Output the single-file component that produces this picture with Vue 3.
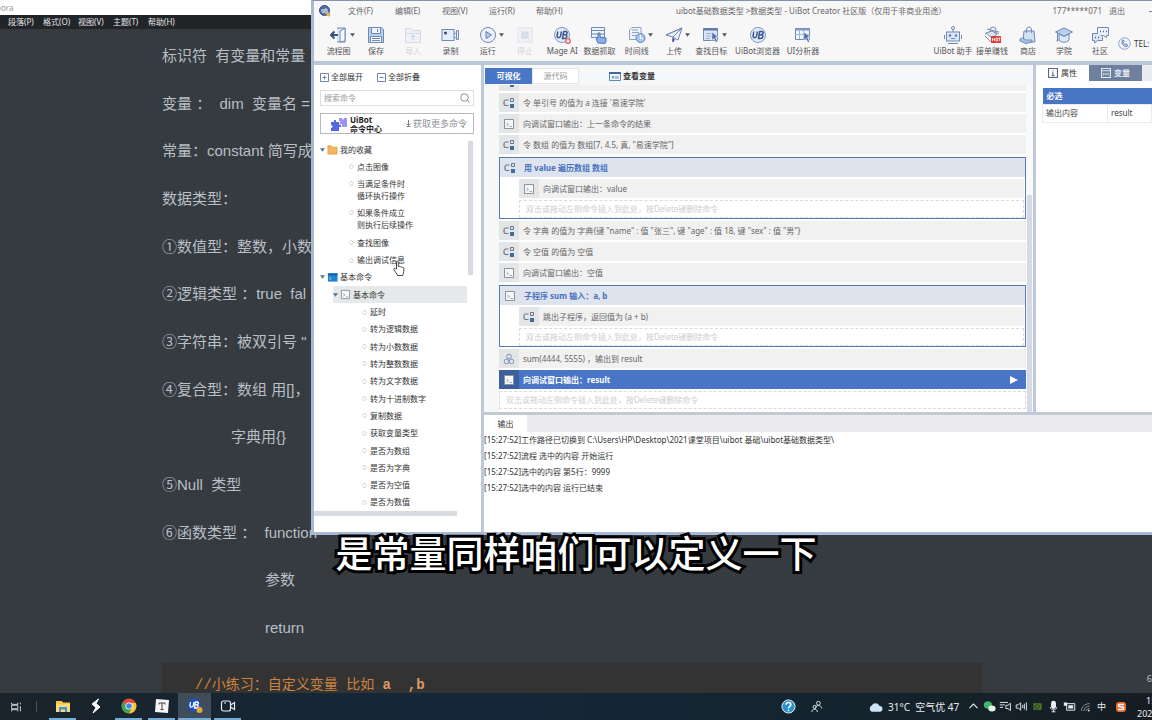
<script setup>
const docMenus = ['段落(P)', '格式(O)', '视图(V)', '主题(T)', '帮助(H)']
const docLines = [
  { text: '标识符  有变量和常量' },
  { text: '变量 ：  dim  变量名 =' },
  { text: '常量：constant 简写成' },
  { text: '数据类型：' },
  { text: '①数值型：整数，小数' },
  { text: '②逻辑类型 ：true  fal' },
  { text: '③字符串：被双引号 "' },
  { text: '④复合型：数组 用[]，' },
  { text: '字典用{}', level: 'in1' },
  { text: '⑤Null  类型' },
  { text: '⑥函数类型 ：  function' },
  { text: '参数', level: 'in2' },
  { text: 'return', level: 'in2' }
]

const winMenus = ['文件(F)', '编辑(E)', '视图(V)', '运行(R)', '帮助(H)']

const L = 'fill="none" stroke="#6f88b4" stroke-width="1"'
const icons = {
  flow: `<path d="M7 2h8v14H7" fill="#dbe6f5" stroke="#6f88b4"/><path d="M15 2l-5 3v11l5-1z" fill="#f4f8fd" stroke="#6f88b4"/><path d="M1 9h7M4.500 5.500L1 9l3.500 3.500" fill="none" stroke="#3a4f7c" stroke-width="2"/>`,
  save: `<path d="M1.500 1.500h13l2 2v13h-15z" fill="#b9cdea" stroke="#6f88b4"/><path d="M4.500 1.500h9v6h-9z" fill="#edf3fb" stroke="#6f88b4"/><path d="M3.500 10.500h11v6h-11z" fill="#f7fafd" stroke="#6f88b4"/><path d="M10.500 3v3M5 12.500h8M5 14.500h8" ${L}/>`,
  import: `<path d="M1.500 16.500v-14h5l2 2h8v12z" fill="#eef1f6" stroke="#d4dae4"/><path d="M1.500 7.500h15" stroke="#d4dae4"/><path d="M9 14V9M7 11l2-2 2 2" fill="none" stroke="#c2cad8"/>`,
  record: `<rect x="1" y="3.500" width="12" height="11" fill="#e6eef9" stroke="#6f88b4"/><circle cx="4.500" cy="7" r="1.500" fill="#32477a"/><path d="M13 8l2-1M13 11l2 1M15.500 4.500h2v9h-2z" fill="#e6eef9" stroke="#6f88b4"/>`,
  run: `<circle cx="9" cy="9" r="7.500" fill="#eef3fb" stroke="#6f88b4"/><path d="M7 5.500v7l5.500-3.500z" fill="#b9cdea" stroke="#5f7eb6"/>`,
  stop: `<rect x="2" y="2" width="14" height="14" fill="#f0f2f6" stroke="#dde2ea"/><rect x="6" y="6" width="6" height="6" fill="#dbe1ea" stroke="#d0d7e2"/>`,
  ub: `<circle cx="9" cy="9" r="7.500" fill="#e3edf9" stroke="#7d97c6"/><path d="M4.800 5.500l-.7 4.200c-.3 2.600 3 2.600 3.500.2l.8-4.400M9.500 12.500l1.200-7h2c2.200.2 1.700 3-.3 3.300h-1.900 1.900c2.400.2 1.500 3.700-.9 3.700z" fill="none" stroke="#3a548c" stroke-width="1.500"/>`,
  grab: `<path d="M1.500 1.500h13v10h-13z" fill="#edf3fb" stroke="#6f88b4"/><path d="M1.500 4.500h13M1.500 8h13" stroke="#6f88b4"/><path d="M8 17l-2-4 2-1V7h2v4l6 1v4l-1 1.500z" fill="#8bb0e8" stroke="#4c74ba"/>`,
  time: `<path d="M4 1.500h9v12H1.500V4z" fill="#edf3fb" stroke="#8ea2c6"/><path d="M4 6.500h7M4 9.500h5M4 4h6" stroke="#8ea2c6"/><circle cx="12.500" cy="12" r="4.500" fill="#a9c6f0" stroke="#5f84c2"/><path d="M12.500 9v3.500h2.500" fill="none" stroke="#fff"/>`,
  send: `<path d="M1 9L17 2l-4 12-5-3z" fill="#eef4fc" stroke="#6f88b4"/><path d="M17 2L8 11v5l2.500-3.500M17 2L1 9" fill="none" stroke="#6f88b4"/><path d="M7.500 11.500v5l2-3z" fill="#32477a"/>`,
  target: `<path d="M1.500 2.500h14v12h-14z" fill="#dbe6f5" stroke="#6f88b4"/><path d="M1.500 3.500h14" stroke="#5d78ac" stroke-width="2"/><path d="M4 7.500h6M4 10h6M4 12.500h4" stroke="#9fb3d6"/><path d="M10 6l6 5-2.500.5 2 4-1.500 1-2-4-2 2z" fill="#4e6ca6" stroke="#fff" stroke-width=".5"/>`,
  analyze: `<path d="M1.500 2.500h14v11h-14z" fill="#f2f6fc" stroke="#6f88b4"/><path d="M1.500 3.500h14" stroke="#7f99cc" stroke-width="2"/><path d="M5.500 4v9M9.500 4v9M1.500 8.500h14" stroke="#9fb3d6"/><path d="M10 6l6 5-2.500.5 2 4-1.500 1-2-4-2 2z" fill="#4e6ca6" stroke="#fff" stroke-width=".5"/>`,
  robot: `<circle cx="9" cy="2" r="1.500" ${L}/><path d="M9 3.500V6" ${L}/><rect x="2.500" y="6" width="13" height="9" fill="#dbe7f7" stroke="#6f88b4"/><circle cx="6" cy="9.500" r="1.200" fill="#5476b4"/><circle cx="12" cy="9.500" r="1.200" fill="#5476b4"/><path d="M7 12.500h4M.5 9v4M17.500 9v4M4 17.500h10" ${L}/>`,
  hot: `<circle cx="10" cy="4" r="3" fill="#eef3fa" stroke="#7a8fb6"/><path d="M4 3l12 3M2 8c4-3 10-3 14 0M2 10l6 6" fill="none" stroke="#7a8fb6"/><path d="M3 7l6-2 5 3-5 4z" fill="#dbe4f2" stroke="#7a8fb6"/><rect x="8" y="10" width="10" height="7" fill="#d9403c"/><path d="M9.500 12v3M11.500 12v3M9.500 13.500h2M13 12h1.500v3H13zM15.500 12h2M16.500 12v3" fill="none" stroke="#fff" stroke-width=".7"/>`,
  shop: `<path d="M5 5h10l1 11H4z" fill="#d3e1f5" stroke="#6f88b4"/><path d="M7.500 7V4c0-4 5-4 5 0v3" ${L}/><path d="M1 13c2-2 4 0 6 1h6v2l-6 1.500L1 15z" fill="#a9c2e8" stroke="#6f88b4"/>`,
  school: `<path d="M9 2l8.500 4L9 10 .5 6z" fill="#b9d2f2" stroke="#6f88b4"/><path d="M4 8v6c2 3 8 3 10 0V8l-5 2.500z" fill="#dce8f8" stroke="#6f88b4"/><path d="M2.500 7v7" stroke="#6f88b4"/><circle cx="2.500" cy="14.500" r="1" fill="#6f88b4"/>`,
  chat: `<path d="M6.500 1.500h11v8h-2v2l-3-2h-6z" fill="#eef3fb" stroke="#6f88b4"/><path d="M6.500 7.500h-5v7h2v2.500l3-2.500h5v-4" fill="#dbe6f5" stroke="#6f88b4"/><path d="M9 5.500h1M12 5.500h1M15 5.500h1M4 11.500h1M7 11.500h1" stroke="#4c6496" stroke-width="1.500"/>`,
  phone: `<circle cx="9" cy="9" r="8" fill="#f2f6fc" stroke="#6080b8"/><path d="M6 4.500c-2 4 1 9 6 9l1.500-2.500-2.500-1.500-1.500 1C8 9.500 7.500 8.500 7.500 7.500L8.500 6.500 7.500 4z" fill="#b9cdea" stroke="#46659f"/>`
}
const tools = [
  { n: '流程图', i: 'flow', c: true }, { n: '保存', i: 'save' }, { n: '导入', i: 'import', off: true },
  { n: '录制', i: 'record' }, { n: '运行', i: 'run', c: true }, { n: '停止', i: 'stop', off: true },
  { n: 'Mage AI', i: 'ub', b: true }, { n: '数据抓取', i: 'grab' }, { n: '时间线', i: 'time', c: true },
  { n: '上传', i: 'send', c: true }, { n: '查找目标', i: 'target', c: true }
]
const links = [
  { n: '接单赚钱', i: 'hot' }, { n: '商店', i: 'shop' }, { n: '学院', i: 'school' }, { n: '社区', i: 'chat' }
]

const tree = [
  { t: ['我的收藏'], k: 'root', i: 'folder' },
  { t: ['点击图像'], k: 'fav' },
  { t: ['当满足条件时', '循环执行操作'], k: 'fav' },
  { t: ['如果条件成立', '则执行后续操作'], k: 'fav' },
  { t: ['查找图像'], k: 'fav' },
  { t: ['输出调试信息'], k: 'fav' },
  { t: ['基本命令'], k: 'root', i: 'cmd' },
  { t: ['基本命令'], k: 'sub', i: 'term' },
  ...['延时', '转为逻辑数据', '转为小数数据', '转为整数数据', '转为文字数据', '转为十进制数字', '复制数据',
    '获取变量类型', '是否为数组', '是否为字典', '是否为空值', '是否为数值'].map(t => ({ t: [t], k: 'leaf' }))
]

const small = {
  set: `<path d="M5.500 3H2.500C1.500 3 1 3.700 1 5v1.500C1 8 1.500 8.500 2.500 8.500h3" fill="none" stroke="#66788f" stroke-width="1.200"/><path d="M7.500 1.500h3v3h-3z" fill="none" stroke="#66788f"/><path d="M7 7h4v4H7z" fill="#3c6f9c"/>`,
  term: `<path d="M1.500 1.500h9v9h-9z" fill="#f6f7f8" stroke="#8a929c"/><path d="M3.500 5l2 1.500-2 1.500M6.500 8.500h2.500" fill="none" stroke="#8a929c" stroke-width=".8"/>`,
  cubes: `<circle cx="6" cy="3.500" r="2.300" fill="none" stroke="#7d94b8"/><circle cx="3.500" cy="8.500" r="2.300" fill="none" stroke="#7d94b8"/><circle cx="8.500" cy="8.500" r="2.300" fill="none" stroke="#7d94b8"/>`,
  folder: `<path d="M1 2h4l1 1.500h5V11H1z" fill="#f3b562" stroke="#e09a3c" stroke-width=".8"/>`,
  cmd: `<path d="M1 1.500h10.500v9H1z" fill="#1d83d6"/><path d="M1 1.500h10.500v2H1z" fill="#155fa5"/><path d="M2.500 5.500l2 1.500-2 1.500" fill="none" stroke="#cfe6fa" stroke-width=".8"/>`
}
const dropHint = '双击或拖动左侧命令插入到此处，按Delete键删除命令'
const rows = [
  { i: 'set', t: '' },
  { i: 'set', t: "令 单引号 的值为 a 连接 '易速学院'" },
  { i: 'term', t: '向调试窗口输出：上一条命令的结果' },
  { i: 'set', t: '令 数组 的值为 数组[7, 4.5, 真, "易速学院"]' },
  { i: 'set', t: '用 value 遍历数组 数组', child: { i: 'term', t: '向调试窗口输出：value' } },
  { i: 'set', t: '令 字典 的值为 字典{键 "name" : 值 "张三", 键 "age" : 值 18, 键 "sex" : 值 "男"}' },
  { i: 'set', t: '令 空值 的值为 空值' },
  { i: 'term', t: '向调试窗口输出：空值' },
  { i: 'term', t: '子程序 sum 输入：a, b', child: { i: 'set', t: '跳出子程序，返回值为 (a + b)' } },
  { i: 'cubes', t: 'sum(4444, 5555) ，输出到 result' },
  { i: 'term', t: '向调试窗口输出：result', on: true }
]
const logs = [
  '[15:27:52]工作路径已切换到 C:\\Users\\HP\\Desktop\\2021课堂项目\\uibot 基础\\uibot基础数据类型\\',
  '[15:27:52]流程 选中的内容 开始运行',
  '[15:27:52]选中的内容 第5行：9999',
  '[15:27:52]选中的内容 运行已结束'
]

const apps = [
  { n: '文件资源管理器', open: true, s: `<path d="M1 3h6l1 1.500h7V14H1z" fill="#f0c64c"/><path d="M1 6h14v8H1z" fill="#f9dc78"/><path d="M4 9h8v5h-2v-2.500H6V14H4z" fill="#4a94c8"/>` },
  { n: '笔记', s: `<path d="M10.500 1L4 6l4 3.500L5 15l7-6-4-3.500z" fill="#fff" stroke="#fff"/>` },
  { n: 'Chrome', open: true, s: `<circle cx="8" cy="8" r="7.500" fill="#e04a3a"/><path d="M1.500 4.300A7.500 7.500 0 0 0 8 15.500L11 9.500 8 8z" fill="#3da352"/><path d="M8 15.500A7.500 7.500 0 0 0 14.800 5H8l3 4.500z" fill="#f5c93a"/><circle cx="8" cy="8" r="3.600" fill="#fff"/><circle cx="8" cy="8" r="2.800" fill="#4486e8"/>` },
  { n: 'Typora', open: true, s: `<path d="M2 1l13 1-1 13-13-1z" fill="#f4f4f4"/><path d="M5 5h6M8 5v6.500M6.500 11.500h3M5 5v1.500M11 5v1.500" fill="none" stroke="#444"/>` },
  { n: 'UiBot', open: true, on: true, s: `<circle cx="7" cy="7" r="6.500" fill="#1b4fc4"/><path d="M3.500 4L3 7.500c0 2.500 3 2 3.300 0L7 4M7.500 10l1-6h1.700c2 .2 1.500 2.700-.5 2.800H8.500h1.400C12 7 11.200 10 9.500 10z" fill="none" stroke="#fff" stroke-width="1.300"/><circle cx="12.500" cy="12" r="3" fill="#e5a93a"/>` },
  { n: '录屏', open: true, s: `<rect x="1.500" y="3" width="9" height="10" rx="2" fill="none" stroke="#e8ecf0" stroke-width="1.200"/><path d="M10.500 7l4-2.500v7L10.500 9" fill="none" stroke="#e8ecf0" stroke-width="1.200"/><path d="M4 5h2" stroke="#e8ecf0"/>` }
]
const tray = [
  { n: '展开', s: `<path d="M3 10l5-5 5 5" fill="none" stroke="#e8ecf0" stroke-width="1.300"/>` },
  { n: '微信', s: `<ellipse cx="6" cy="6" rx="5" ry="4.500" fill="#43b56b"/><ellipse cx="11" cy="10.500" rx="4.500" ry="3.700" fill="#e6f5ea"/>` },
  { n: '媒体', s: `<path d="M1 3h10M1 6h6M1 9h4M14 4v9l-3-2.500H8.500v-4H11z" fill="none" stroke="#dfe4e8" stroke-width="1.200"/>` },
  { n: '音量', s: `<path d="M1.500 6h2.500L7 3.500v9L4 10H1.500zM9.500 6v4M11.500 4.500v7M14 3v10" fill="none" stroke="#dfe4e8" stroke-width="1.200"/>` },
  { n: '显卡', s: `<path d="M3 4h10v8H3z" fill="#4c7a24"/><ellipse cx="7.500" cy="8" rx="3" ry="2" fill="none" stroke="#1b2830"/>` },
  { n: '麦克风', s: `<rect x="5" y="1" width="6" height="10" rx="3" fill="#f2f4f6"/><path d="M4 8.500c0 5 8 5 8 0M8 12v3M5.500 14.500h5" fill="none" stroke="#f2f4f6"/>` },
  { n: '电源', s: `<path d="M4.500 4.500h10v8h-10z" fill="none" stroke="#e8ecf0" stroke-width="1.200"/><path d="M6.500 6.500h6v4h-6zM1 3h4v4H1z" fill="#e8ecf0"/>` },
  { n: '网络', s: `<path d="M3 13.500c0-5 4-9 10-9M6 13.500c0-3.500 3-6 7-6M9 13.500c0-2 1.500-3 4-3" fill="none" stroke="#8b9499" stroke-width="1.200"/><path d="M11 12h2v2h-2z" fill="#dfe4e8"/>` }
]
</script>

<template>
  <div class="desktop">
    <main class="editor">
      <div class="doc-title">pora</div>
      <nav class="doc-menu"><button v-for="m in docMenus" :key="m">{{ m }}</button></nav>
      <article class="doc">
        <p v-for="l in docLines" :key="l.text" :class="l.level">{{ l.text }}</p>
      </article>
      <pre class="code">//小练习：自定义变量 比如 <b>a  ,b</b></pre>
      <span class="count">6</span>
    </main>

    <section class="win">
      <header class="titlebar">
        <svg class="logo" viewBox="0 0 12 12"><circle cx="5.500" cy="5.500" r="5" fill="#4c6d9e" stroke="#2d4f86" /><path d="M3 4v2.500c0 1.500 2 1.500 2 0V4M6 8V4h1.500c1 .2 1 1.800 0 2 1.500 0 1.200 2 0 2z" fill="none" stroke="#e8f0fa" /><circle cx="9.500" cy="9.500" r="2" fill="#e5b05a" /></svg>
        <nav class="win-menu"><button v-for="m in winMenus" :key="m">{{ m }}</button></nav>
        <h1>uibot基础数据类型 &gt;数据类型 - UiBot Creator 社区版（仅用于非商业用途）</h1>
        <div class="account"><span>177*****071</span><a href="#">退出</a></div>
        <button class="min" aria-label="最小化"></button>
      </header>

      <div class="toolbar">
        <div class="tools">
          <button v-for="t in tools" :key="t.n" class="tool" :class="{ off: t.off }">
            <span class="pic">
              <svg viewBox="0 0 18 18" v-html="icons[t.i]"></svg>
              <svg v-if="t.c" class="caret" viewBox="0 0 6 4"><path d="M0 0h6L3 4z" fill="#555b66" /></svg>
              <svg v-if="t.b" class="plus" viewBox="0 0 6 6"><circle cx="3" cy="3" r="3" fill="#d96a6a" /><path d="M3 1v4M1 3h4" stroke="#fff" /></svg>
            </span>{{ t.n }}
          </button>
        </div>
        <button class="tool w-browser"><span class="pic"><svg viewBox="0 0 18 18" v-html="icons.ub"></svg></span>UiBot浏览器</button>
        <button class="tool w-link"><span class="pic"><svg viewBox="0 0 18 18" v-html="icons.analyze"></svg></span>UI分析器</button>
        <div class="links">
          <button class="tool w-helper"><span class="pic"><svg viewBox="0 0 18 18" v-html="icons.robot"></svg></span>UiBot 助手</button>
          <button v-for="t in links" :key="t.n" class="tool w-link"><span class="pic"><svg viewBox="0 0 18 18" v-html="icons[t.i]"></svg></span>{{ t.n }}</button>
          <div class="tel"><svg viewBox="0 0 18 18" v-html="icons.phone"></svg><span>TEL:</span></div>
        </div>
      </div>

      <div class="body">
        <aside class="side">
          <div class="expand">
            <button><svg viewBox="0 0 9 9"><path d="M.5.5h8v8h-8zM4.500 2.500v4M2.500 4.500h4" fill="none" stroke="#6f86a8" /></svg>全部展开</button>
            <button><svg viewBox="0 0 9 9"><path d="M.5.5h8v8h-8zM2.500 4.500h4" fill="none" stroke="#6f86a8" /></svg>全部折叠</button>
          </div>
          <label class="search">
            <input type="text" placeholder="搜索命令" aria-label="搜索命令">
            <svg viewBox="0 0 10 10"><circle cx="4.500" cy="4.500" r="3.800" fill="none" stroke="#8a8f98" /><path d="M7.300 7.300L9.700 9.700" stroke="#8a8f98" /></svg>
          </label>
          <button class="center">
            <svg viewBox="0 0 18 15"><path d="M1 6h3c-1-3 3-3 2 0h3v3c3-1 3 3 0 2v4H1v-3c2 0 2-3 0-3z" fill="#5468e6" /><path d="M9 2h3c0 2 2 2 2 0h3v9h-5V8c-3 1-3-3-1-3H9z" fill="#9a92f4" /></svg>
            <b>UiBot<br>命令中心</b>
            <span><svg viewBox="0 0 5 7"><path d="M2.500 0v5M.5 3.500l2 2 2-2M.5 6.500h4" fill="none" stroke="#7a7f88" /></svg>获取更多命令</span>
          </button>
          <div class="tree-wrap">
            <ul class="tree">
              <li v-for="(n, k) in tree" :key="k" :class="[n.k, { two: n.t.length > 1 }]">
                <svg v-if="n.i" class="arr" viewBox="0 0 6 4"><path d="M0 0h6L3 4z" fill="#4f7396" /></svg>
                <svg v-if="n.i" class="ic" viewBox="0 0 12 12" v-html="small[n.i]"></svg>
                <svg v-else class="dot" viewBox="0 0 5 7"><path d="M2.500 1L4.500 3.500 2.500 6 .5 3.500z" fill="none" stroke="#c3c6ca" stroke-width=".8" /></svg>
                <span><template v-for="(s, j) in n.t" :key="s"><br v-if="j">{{ s }}</template></span>
              </li>
            </ul>
            <div class="vbar"></div>
          </div>
          <div class="hbar"></div>
        </aside>

        <div class="right">
          <div class="work">
            <section class="canvas">
              <div class="views">
                <button class="on">可视化</button><button>源代码</button>
                <button class="vars"><svg viewBox="0 0 12 9"><path d="M.5.5h11v8H.5z" fill="#eef4fb" stroke="#5f86b6" /><path d="M0 1h12" stroke="#41699f" stroke-width="2" /><path d="M3 4l1 2.500L5 4M7 4v3M9 4v3" fill="none" stroke="#5f86b6" /></svg>查看变量</button>
              </div>
              <div class="flow">
                <div class="list">
                  <template v-for="(r, k) in rows" :key="k">
                    <div v-if="r.child" class="group">
                      <div class="row head"><i><svg viewBox="0 0 12 12" v-html="small[r.i]"></svg></i>{{ r.t }}</div>
                      <div class="inner">
                        <div class="row"><i><svg viewBox="0 0 12 12" v-html="small[r.child.i]"></svg></i>{{ r.child.t }}</div>
                        <div class="drop">{{ dropHint }}</div>
                      </div>
                    </div>
                    <div v-else class="row" :class="{ sel: r.on }">
                      <i><svg viewBox="0 0 12 12" v-html="small[r.i]"></svg></i>{{ r.t }}
                      <svg v-if="r.on" class="play" viewBox="0 0 8 8"><path d="M0 0l8 4-8 4z" fill="#fff" /></svg>
                    </div>
                  </template>
                  <div class="drop">{{ dropHint }}</div>
                </div>
                <div class="scroll"><div></div></div>
              </div>
            </section>

            <aside class="props">
              <div class="ptabs">
                <button class="on"><svg viewBox="0 0 9 9"><path d="M.5.5h8v8h-8zM4.500 2v1M3.500 4.500h1V7M3 7h3" fill="none" stroke="#56698c" /></svg>属性</button>
                <button><svg viewBox="0 0 9 9"><path d="M.5.5h8v8h-8zM.5 2.500h8M2.500 4.500v2M4.500 4.500v2M6.500 4.500v2" fill="none" stroke="#dde5f2" /></svg>变量</button>
              </div>
              <table>
                <colgroup><col class="key"><col></colgroup>
                <thead><tr><th colspan="2">必选</th></tr></thead>
                <tbody><tr><td>输出内容</td><td>result</td></tr></tbody>
              </table>
            </aside>
          </div>

          <section class="output">
            <div class="otabs"><button>输出</button></div>
            <p v-for="l in logs" :key="l">{{ l }}</p>
          </section>
        </div>
      </div>
      <svg class="hand" viewBox="0 0 12 16"><path d="M3.500 9V2c0-1.300 1.800-1.300 1.800 0v4.500c1-.6 1.700-.2 1.900.4 1-.4 1.600 0 1.800.6 1-.3 1.800.1 1.800 1v3c0 1.600-1 2.200-1 4H4.500C4 13.500 2 12 .8 9.500c-.4-1.200 1-1.500 1.600-.7z" fill="#fff" stroke="#333" stroke-width=".9" /></svg>
    </section>

    <p class="caption">是常量同样咱们可以定义一下</p>

    <footer class="taskbar">
      <button class="view" aria-label="任务视图"><svg viewBox="0 0 16 16"><path d="M3 3v2h7V3M3 13v-2h7v2M3 6h7v4H3zM13 3v2M13 7v6" fill="none" stroke="#dfe4e8" /></svg></button>
      <span class="sep"></span>
      <button v-for="a in apps" :key="a.n" class="app" :class="{ open: a.open, on: a.on }" :aria-label="a.n"><svg viewBox="0 0 16 16" v-html="a.s"></svg></button>
      <div class="status">
        <button class="util" aria-label="帮助"><svg viewBox="0 0 16 16"><circle cx="8" cy="8" r="7" fill="#2a93cf" stroke="#e6f3fa" /><path d="M5.500 6c0-3 5-3 5 0 0 2-2.500 1.700-2.500 4M8 11.500v1.500" fill="none" stroke="#fff" stroke-width="1.600" /></svg></button>
        <button class="util" aria-label="人脉"><svg viewBox="0 0 16 16"><circle cx="10" cy="4.500" r="2" fill="none" stroke="#e0e4e8" /><path d="M6.500 10c0-4 7-4 7 0" fill="none" stroke="#e0e4e8" /><circle cx="6" cy="8.500" r="1.700" fill="none" stroke="#e0e4e8" /><path d="M3 14c0-4 6-4 6 0" fill="none" stroke="#e0e4e8" /></svg></button>
        <div class="weather"><svg viewBox="0 0 16 12"><path d="M4 11a3.500 3.500 0 0 1 0-6.500 4.500 4.500 0 0 1 8.300.5 3 3 0 0 1 .2 6z" fill="#cfe4f4" /></svg>31°C&nbsp; 空气优 47</div>
        <button v-for="t in tray" :key="t.n" class="tr" :aria-label="t.n"><svg viewBox="0 0 16 16" v-html="t.s"></svg></button>
        <span class="ime">中</span>
        <button class="sogou" aria-label="输入法"><svg viewBox="0 0 12 12"><rect x="1" y="1" width="10" height="10" rx="3" fill="#ea6a2c" /><path d="M9 3.500H4.500c-1.500 0-1.500 2 0 2.200l3 .3c1.500.3 1.500 2.500 0 2.500H3" fill="none" stroke="#fff" stroke-width="1.500" /></svg></button>
        <div class="clock"><span class="hour">15:</span><span>2021</span></div>
      </div>
    </footer>
  </div>
</template>

<style>
body { margin: 0; background: #363b40; }
</style>

<style scoped>
* { box-sizing: border-box; }
.desktop { position: relative; display: flex; flex-direction: column; height: 100vh; overflow: hidden; background: #363b40; font-family: "Noto Sans", "Noto Sans CJK SC", sans-serif; font-size: 8px; line-height: 12px; }
button { font: inherit; color: inherit; background: none; border: 0; padding: 0; margin: 0; white-space: nowrap; cursor: pointer; }
svg { display: block; flex: none; }
p, h1, ul { margin: 0; padding: 0; }

.editor { position: relative; flex: 1; min-height: 0; display: flex; flex-direction: column; color: #b8bfc6; }
.doc-title { height: 15px; background: #fff; color: #999; line-height: 16px; text-indent: -4px; }
.doc-menu { height: 14px; display: flex; gap: 9px; padding-left: 8px; background: #222528; color: #e4e6e8; line-height: 14px; }
.doc-menu button { width: 26px; text-align: left; }
.doc { flex: 1; min-height: 0; display: grid; grid-auto-rows: 1fr; align-items: center; padding: 3px 0 11px 162px; font: 15px/24px "Liberation Sans", "Noto Sans CJK SC", sans-serif; }
.doc p { white-space: pre; }
.doc .in1 { padding-left: 69px; }
.doc .in2 { padding-left: 103px; }
.code { height: 30px; margin: 0 170px 0 162px; padding: 12px 0 0 33px; background: #333; color: #cd8340; font: 14px/20px "Liberation Mono", "Noto Sans CJK SC", monospace; overflow: hidden; }
.code b { color: #dc9a66; }
.count { position: absolute; right: 0; bottom: 8px; font-size: 9px; }

.win { position: absolute; left: 311px; top: 0; right: 0; height: 535px; display: flex; flex-direction: column; background: #f7f7f8; border: solid #a9b8d3; border-width: 1px 0 3px 3px; border-top-color: #8592ae; color: #444; }
.titlebar { height: 20px; display: flex; align-items: center; color: #666; }
.logo { width: 12px; height: 12px; margin: 0 17px 0 5px; }
.win-menu { display: flex; gap: 9px; }
.win-menu button { width: 38px; text-align: left; }
.titlebar h1 { margin-left: 102px; font-size: 8px; font-weight: 400; white-space: nowrap; }
.account { margin-left: auto; display: flex; gap: 7px; }
.account a { color: inherit; text-decoration: none; }
.min { width: 3px; height: 1px; margin-left: 24px; background: #888; }

.toolbar { height: 44px; display: flex; padding: 5px 0 0 6px; border-bottom: 4px solid #bcc7d5; color: #555; }
.tools { width: 410px; display: flex; }
.tool { display: flex; flex-direction: column; align-items: center; }
.tools .tool { flex: 1 1 0; min-width: 0; }
.tool.off { color: #cfd3d9; }
.pic { position: relative; margin-bottom: 1px; }
.pic svg { width: 18px; height: 18px; }
.pic .caret { position: absolute; left: 20px; top: 7px; width: 5px; height: 4px; }
.pic .plus { position: absolute; right: 0; bottom: 0; width: 6px; height: 6px; }
.w-browser { width: 55px; }
.w-link { width: 36px; }
.w-helper { width: 42px; }
.links { margin-left: auto; display: flex; }
.tel { width: 34px; display: flex; align-items: center; gap: 3px; white-space: nowrap; color: #333; }
.tel svg { width: 13px; height: 13px; }

.body { flex: 1; min-height: 0; display: flex; background: #fff; }
.side { width: 170px; display: flex; flex-direction: column; padding-top: 6px; border-right: 3px solid #bec8d6; color: #333; }
.expand { display: flex; gap: 14px; padding-left: 6px; }
.expand button { display: flex; align-items: center; gap: 2px; }
.expand svg { width: 9px; height: 9px; }
.search { display: flex; align-items: center; height: 16px; margin: 7px 7px 0 6px; padding: 0 3px; border: 1px solid #dcdfe3; }
.search input { flex: 1; min-width: 0; border: 0; outline: 0; padding: 0; background: none; font: inherit; }
.search input::placeholder { color: #999; opacity: 1; }
.search svg { width: 10px; height: 10px; }
.center { display: flex; align-items: center; height: 21px; margin: 7px 7px 0 6px; padding: 0 6px 0 9px; border: 1px solid #b6b9bf; text-align: left; }
.center > svg { width: 18px; height: 15px; }
.center b { margin-left: 2px; line-height: 9px; color: #222; }
.center span { display: flex; align-items: center; gap: 2px; margin-left: auto; font-size: 9px; color: #8f9298; }
.center span svg { width: 5px; height: 7px; }
.tree-wrap { flex: 1; min-height: 0; display: flex; margin-top: 7px; }
.tree { flex: 1; display: flex; flex-direction: column; justify-content: space-between; list-style: none; }
.tree li { display: flex; align-items: center; height: 17px; white-space: nowrap; flex: none; }
.tree .two { height: 29px; align-items: flex-start; padding-top: 2px; }
.tree .root { padding-left: 6px; gap: 2px; }
.tree .fav { padding-left: 35px; gap: 3px; }
.tree .leaf { padding-left: 48px; gap: 3px; }
.tree .sub { margin-left: 19px; gap: 2px; background: #e6e9ea; }
.arr { width: 5px; height: 4px; }
.ic { width: 11px; height: 11px; }
.dot { width: 5px; height: 7px; }
.tree .two .dot { margin-top: 2px; }
.vbar { width: 5px; height: 134px; margin: 0 8px 0 1px; background: #d7dae1; }
.hbar { width: 143px; height: 5px; margin-bottom: 16px; background: #d9dce1; }

.right { flex: 1; min-width: 0; display: flex; flex-direction: column; }
.work { flex: 1; min-height: 0; display: flex; }
.canvas { flex: 1; min-width: 0; display: flex; flex-direction: column; background: #f5f7f9; }
.views { display: flex; height: 20px; padding: 3px 0 0 1px; }
.views button { width: 47px; height: 16px; background: #fff; border: 1px solid #e2e5e9; color: #999; }
.views .on { background: #4877c8; border-color: #4877c8; color: #fff; font-weight: 700; }
.views .vars { display: flex; align-items: center; gap: 2px; width: auto; margin-left: 30px; background: none; border: 0; color: #333; font-weight: 700; }
.vars svg { width: 12px; height: 9px; }
.flow { flex: 1; min-height: 0; display: flex; overflow: hidden; }
.list { flex: 1; min-width: 0; display: flex; flex-direction: column; justify-content: flex-end; gap: 2px; margin-left: 15px; padding-bottom: 3px; background: #fff; }
.row { flex: none; display: flex; align-items: center; height: 19px; background: #f1f1f2; color: #666; white-space: pre; }
.row i { display: flex; align-items: center; justify-content: center; width: 20px; height: 19px; margin-right: 4px; background: #e4e5e7; }
.row i svg { width: 12px; height: 12px; }
.group { flex: none; margin-top: 1px; border: 1px solid #587bb4; background: #fff; }
.head { background: #dde4ee; color: #4a70c0; font-weight: 700; }
.head i { background: none; }
.inner { display: flex; flex-direction: column; gap: 2px; padding: 2px 1px 0 19px; }
.drop { flex: none; height: 18px; padding-left: 6px; border: 1px dashed #d9dbe0; color: #ccced2; line-height: 16px; white-space: nowrap; }
.sel { background: #4975c7; color: #fff; font-weight: 700; }
.sel i { background: #3d5f9f; }
.play { width: 8px; height: 8px; margin: 0 8px 0 auto; }
.scroll { width: 7px; padding: 110px 1px 0 1px; background: #f9fafb; }
.scroll div { height: 100%; background: #d5dae6; }

.props { width: 119px; border-left: 3px solid #bec8d6; background: #fff; }
.ptabs { display: flex; height: 16px; background: #e9edf2; }
.ptabs button { display: flex; align-items: center; justify-content: center; gap: 3px; width: 53px; background: #6f809f; color: #e6ecf5; font-weight: 700; }
.ptabs .on { background: #fff; color: #333; font-weight: 400; }
.ptabs svg { width: 10px; height: 10px; }
.props table { width: 110px; margin: 7px 0 0 6px; border-collapse: collapse; table-layout: fixed; }
.props .key { width: 65px; }
.props th { height: 16px; padding: 0 4px; background: #4975c7; color: #fff; text-align: left; }
.props td { height: 18px; padding: 0 0 0 3px; border: 1px solid #e9eaec; }

.output { height: 120px; border-top: 3px solid #c3c9d3; background: #fff; color: #333; }
.otabs { height: 17px; background: #ececee; }
.otabs button { width: 43px; height: 17px; background: #fff; }
.output p { line-height: 16px; white-space: nowrap; }
.hand { position: absolute; left: 79px; top: 259px; width: 12px; height: 16px; }

.caption { position: absolute; left: 0; right: 0; top: 525px; text-align: center; color: #fff; font: 500 37px/54px "Noto Sans CJK SC", sans-serif; -webkit-text-stroke: 6px #000; paint-order: stroke fill; stroke-linejoin: round; }

.taskbar { position: relative; display: flex; align-items: center; height: 27px; background: linear-gradient(90deg, #1a232a, #14283a 40%, #14242f 70%, #161d22); color: #e8ecf0; }
.view { width: 32px; display: flex; justify-content: center; }
.view svg { width: 14px; height: 14px; }
.sep { width: 1px; height: 11px; margin: 0 9px 0 4px; background: #4a5258; }
.app { display: flex; align-items: center; justify-content: center; width: 27px; height: 27px; margin: 0 3px; border-bottom: 2px solid transparent; }
.app svg { width: 16px; height: 16px; }
.app.open { border-bottom-color: #78acd8; }
.app.on { width: 33px; margin: 0; background: #3e4d59; }
.status { margin-left: auto; display: flex; align-items: center; height: 27px; }
.util { width: 28px; display: flex; justify-content: center; }
.util svg { width: 15px; height: 15px; }
.weather { display: flex; align-items: center; gap: 5px; width: 135px; padding-left: 38px; font-size: 10px; white-space: nowrap; }
.weather svg { width: 15px; height: 12px; }
.tr { width: 16px; display: flex; justify-content: center; }
.tr svg { width: 13px; height: 13px; }
.ime { width: 17px; text-align: center; font-size: 9px; }
.sogou { width: 21px; display: flex; justify-content: center; }
.sogou svg { width: 12px; height: 12px; }
.clock { display: flex; flex-direction: column; width: 21px; padding-left: 6px; overflow: hidden; font-size: 9px; line-height: 13px; }
.hour { padding-left: 9px; }
</style>
